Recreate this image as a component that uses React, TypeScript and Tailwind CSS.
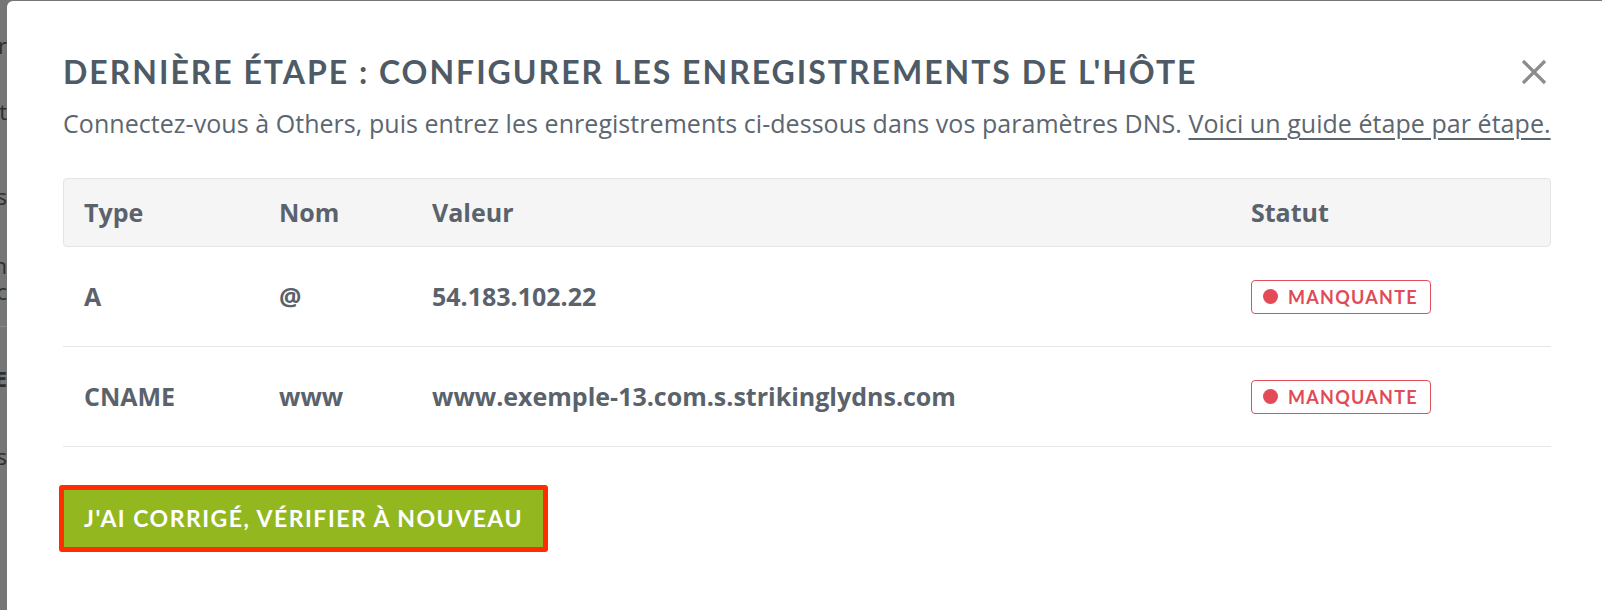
const records = [
  { type: 'A', name: '@', value: '54.183.102.22' },
  { type: 'CNAME', name: 'www', value: 'www.exemple-13.com.s.strikinglydns.com' },
];

function Badge() {
  return (
    <span className="inline-flex h-[34px] w-[180px] items-center gap-[10px] rounded-[4px] border border-[#e0505a] pl-[11px] text-[#e04b56]">
      <span className="h-[15px] w-[15px] shrink-0 rounded-full bg-[#e34b57]" />
      <span className="font-['Lato',sans-serif] text-[18px] font-bold leading-none tracking-[0.07em]">MANQUANTE</span>
    </span>
  );
}

function Backdrop() {
  // bords de la page derrière l'overlay
  return (
    <div className="flex w-[7px] shrink-0 flex-col overflow-hidden font-['Open_Sans',sans-serif] text-[22px] leading-[26px] text-[#2e2e2e]">
      <div className="h-[32px]" />
      <div className="flex h-[26px] justify-end whitespace-nowrap">Paramétrer</div>
      <div className="h-[40px]" />
      <div className="flex h-[26px] justify-end whitespace-nowrap">Droit</div>
      <div className="h-[59px]" />
      <div className="flex h-[26px] justify-end whitespace-nowrap">Sites</div>
      <div className="h-[43px]" />
      <div className="flex h-[26px] justify-end whitespace-nowrap">Domain</div>
      <div className="flex h-[26px] justify-end whitespace-nowrap">Public</div>
      <div className="h-[22px]" />
      <div className="h-px bg-[#8a8a8a]" />
      <div className="h-[38px]" />
      <div className="flex h-[26px] justify-end whitespace-nowrap font-bold">DNE</div>
      <div className="h-[52px]" />
      <div className="flex h-[26px] justify-end whitespace-nowrap">Plans</div>
    </div>
  );
}

function CloseIcon() {
  return (
    <svg width="26" height="26" viewBox="0 0 26 26" fill="none" stroke="currentColor" strokeWidth="3.2" strokeLinecap="butt">
      <path d="M2 2 L24 24 M24 2 L2 24" />
    </svg>
  );
}

export default function App() {
  return (
    <div className="flex h-[610px] w-full overflow-hidden bg-[#767676]">
      <Backdrop />
      <div className="mt-px flex-1 rounded-tl-[6px] bg-white pl-[56px] pr-[51px] pt-[51px]">
        <div className="flex items-center justify-between">
          <h1 className="font-['Lato',sans-serif] text-[32px] font-bold leading-[40px] tracking-[0.062em] text-[#4e5a65]">
            DERNIÈRE ÉTAPE : CONFIGURER LES ENREGISTREMENTS DE L'HÔTE
          </h1>
          <button aria-label="Fermer" className="mr-[4px] text-[#8c8c8c]">
            <CloseIcon />
          </button>
        </div>

        <p className="mt-[14px] whitespace-nowrap font-['Open_Sans',sans-serif] text-[25px] leading-[34px] tracking-[0.002em] text-[#5c6670]">
          Connectez-vous à Others, puis entrez les enregistrements ci-dessous dans vos paramètres DNS.{' '}
          <a className="underline underline-offset-[5px]">Voici un guide étape par étape.</a>
        </p>

        <div className="mt-[38px] font-['Open_Sans',sans-serif] text-[25px] font-bold text-[#5a626c]">
          <div className="grid h-[69px] grid-cols-[195px_153px_819px_1fr] items-center rounded-[4px] border border-[#e4e4e4] bg-[#f5f5f5] pl-[20px]">
            <span>Type</span>
            <span>Nom</span>
            <span>Valeur</span>
            <span>Statut</span>
          </div>
          {records.map((r) => (
            <div
              key={r.type}
              className="grid h-[100px] grid-cols-[195px_153px_819px_1fr] items-center border-b border-[#e6e6e6] pl-[21px]"
            >
              <span>{r.type}</span>
              <span>{r.name}</span>
              <span>{r.value}</span>
              <span className="flex">
                <Badge />
              </span>
            </div>
          ))}
        </div>

        <div className="-ml-[4px] mt-[38px] inline-block rounded-[3px] border-[5px] border-[#ff2d00]">
          <button className="flex h-[57px] w-[479px] items-center justify-center bg-[#93b81f] font-['Lato',sans-serif] text-[23px] font-bold tracking-[0.065em] text-white">
            J'AI CORRIGÉ, VÉRIFIER À NOUVEAU
          </button>
        </div>
      </div>
    </div>
  );
}
